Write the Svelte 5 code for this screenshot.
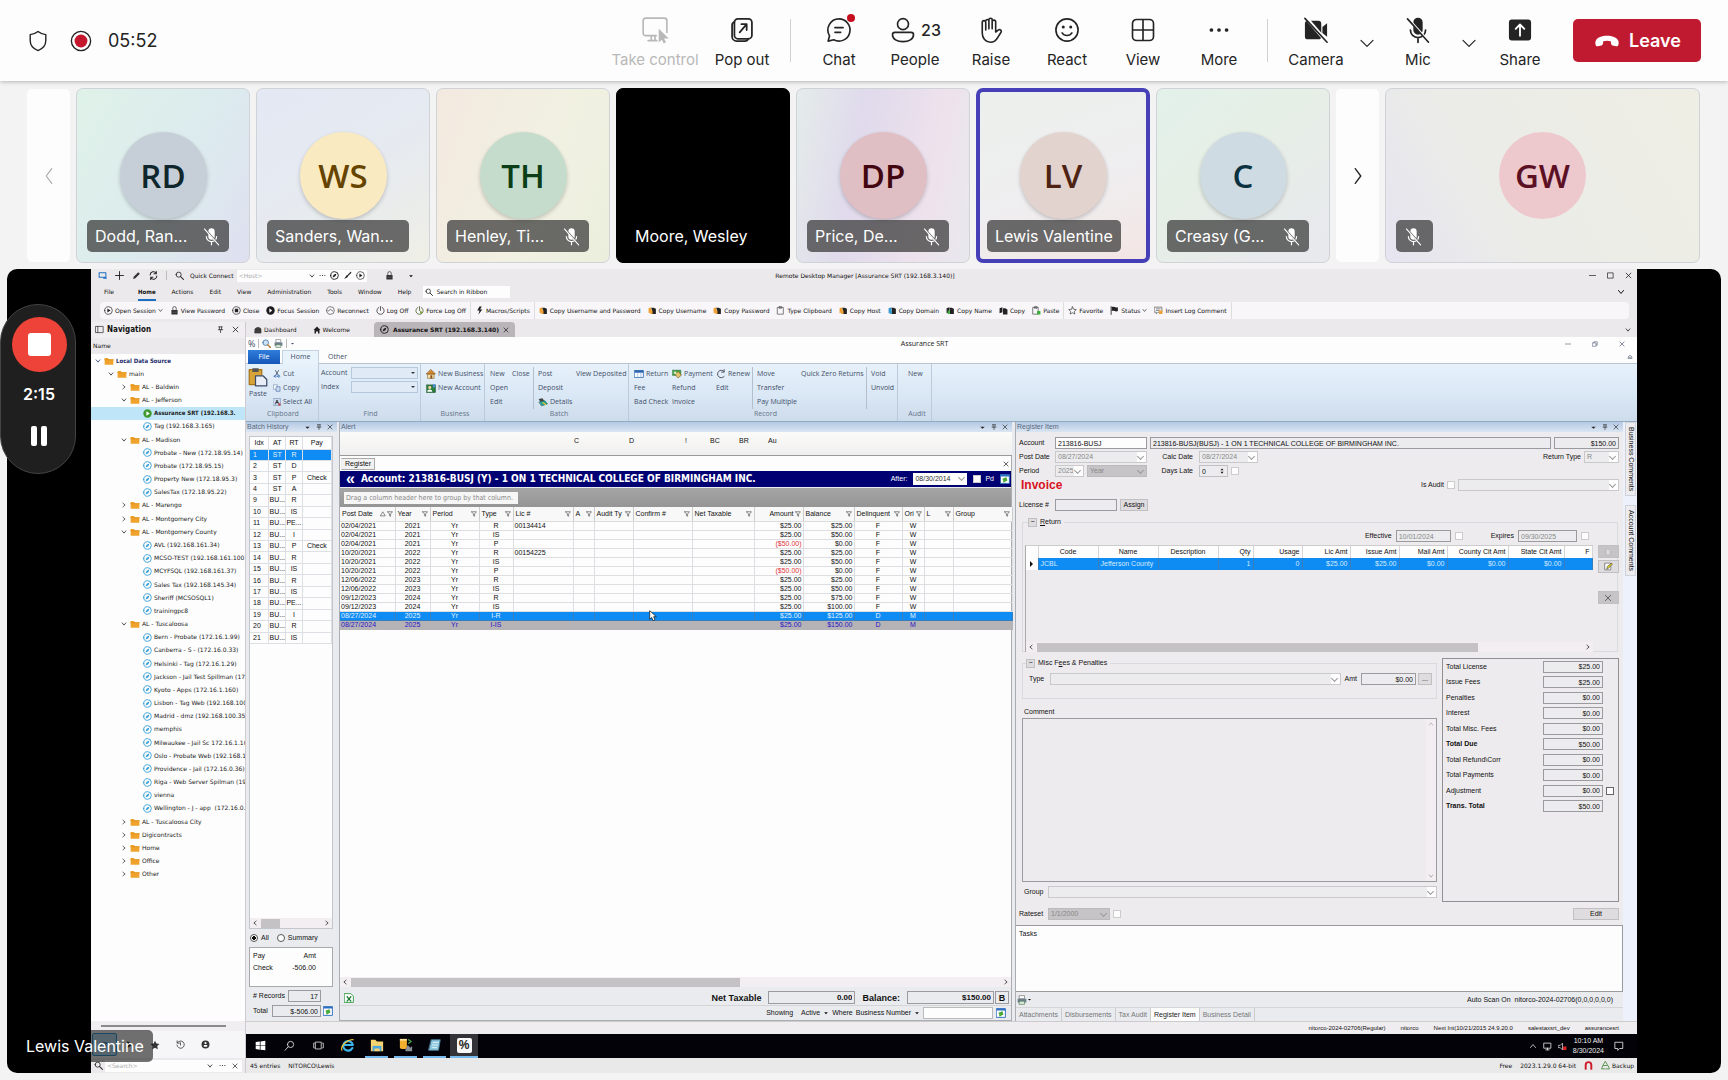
<script lang="ts">
	type Shape = [d: string, fill?: string, stroke?: string, width?: number];

	const circle = (cx: number, cy: number, r: number) =>
		`M${cx - r} ${cy}a${r} ${r} 0 1 0 ${2 * r} 0a${r} ${r} 0 1 0 ${-2 * r} 0z`;

	const INK = 'currentColor';

	// drawn on a 24 unit grid
	const large: Record<string, Shape[]> = {
		shield: [['M12 2.500c2.400 1.900 4.900 2.900 7.800 3.100v6c0 5-2.800 8.200-7.800 10-5-1.800-7.800-5-7.800-10v-6c2.900-.2 5.400-1.200 7.800-3.100z']],
		record: [
			[circle(12, 12, 10.5), 'none', '#242424', 1.5],
			[circle(12, 12, 7), '#c4162c', 'none']
		],
		control: [
			['M13 16.500H4.500a2 2 0 0 1-2-2v-10a2 2 0 0 1 2-2h15a2 2 0 0 1 2 2V14M9 16.500v4M12 16.500v4M6.500 20.500h7', 'none', INK, 1.3],
			['M15 11v11l2.500-2.300 1.500 3 1.800-1-1.600-2.900H23z', INK, 'none']
		],
		popout: [
			['M8.500 2.500h9a3 3 0 0 1 3 3v11a3 3 0 0 1-3 3h-9a3 3 0 0 1-3-3v-11a3 3 0 0 1 3-3z', 'none', INK, 1.5],
			['M5.500 5c-1.200.5-2 1.500-2 3v9.500a4 4 0 0 0 4 4h7c1.500 0 2.500-.8 3-2M10 14l6-7M11.500 7H16v5', 'none', INK, 1.5]
		],
		chat: [['M12 2.500a9.500 9.500 0 1 1-4.500 17.900L2.700 21.500l1.200-4.500A9.500 9.500 0 0 1 12 2.500zM8.500 10h7M8.500 14h5', 'none', INK, 1.4]],
		people: [
			[circle(12, 7, 4.700), 'none', INK, 1.4],
			['M5 14h14a2 2 0 0 1 2 2c0 3.800-4 6-9 6s-9-2.200-9-6a2 2 0 0 1 2-2z', 'none', INK, 1.4]
		],
		raise: [
			['M7.500 12V5.500a1.500 1.500 0 0 0-3 0v9c0 4.500 2.800 8 7 8 3.200 0 4.800-1.300 6.200-4l2.900-4.600c.9-1.300-.7-2.800-2.200-2l-2.400 1.800V5a1.500 1.500 0 0 0-3 0v6M13 11V3.300a1.400 1.400 0 0 0-2.800 0V11M10.200 11V4a1.400 1.400 0 0 0-2.700 0', 'none', INK, 1.4]
		],
		react: [
			[circle(12, 12, 9.5), 'none', INK, 1.4],
			['M7.800 14.500c1.800 3 6.600 3 8.400 0', 'none', INK, 1.4],
			[circle(8.800, 9.500, 1.300) + circle(15.200, 9.500, 1.300), INK, 'none']
		],
		view: [['M6.500 3h11a3.500 3.500 0 0 1 3.500 3.500v11a3.500 3.500 0 0 1-3.500 3.500h-11A3.500 3.500 0 0 1 3 17.500v-11A3.500 3.500 0 0 1 6.500 3zM12 3v18M3 12h18', 'none', INK, 1.4]],
		more: [[circle(5.500, 12, 1.600) + circle(12, 12, 1.600) + circle(18.500, 12, 1.600), INK, 'none']],
		camera: [
			['M5 4h9a2.500 2.500 0 0 1 2.500 2.500v11A2.500 2.500 0 0 1 14 20H5a2.500 2.500 0 0 1-2.500-2.500v-11A2.500 2.500 0 0 1 5 4zM17.500 9.500l4-3.200v11.400l-4-3.200z', INK, 'none'],
			['M3.500 1.500l18 21', 'none', '#fff', 3],
			['M2.500 2l19 20.500', 'none', INK, 1.4]
		],
		mic: [
			['M12 1.500a4 4 0 0 1 4 4v6.500a4 4 0 0 1-8 0V5.500a4 4 0 0 1 4-4z', INK, 'none'],
			['M5.500 12a6.500 6.500 0 0 0 13 0M12 18.500v4', 'none', INK, 1.5],
			['M3.800 2.500l18 20', 'none', 'var(--cut, #fff)', 2],
			['M3 2.500l18 20', 'none', INK, 1.4]
		],
		share: [
			['M5 3h14a2.500 2.500 0 0 1 2.500 2.500v13A2.500 2.500 0 0 1 19 21H5a2.500 2.500 0 0 1-2.500-2.500v-13A2.500 2.500 0 0 1 5 3z', INK, 'none'],
			['M12 17V7.500M8.300 11L12 7.300l3.700 3.700', 'none', '#fff', 1.6]
		],
		phone: [['M12 7.500c4.500 0 8 1.500 9.300 3.600.9 1.400.8 3 .4 4.300-.2.900-1 1.300-1.900 1.100l-3-.7c-.7-.2-1.200-.7-1.300-1.400l-.3-2.100c-2-.7-4.400-.7-6.400 0l-.3 2.100c-.1.700-.6 1.200-1.300 1.400l-3 .7c-.9.2-1.700-.2-1.900-1.100-.4-1.300-.5-2.900.4-4.300C4 9 7.500 7.500 12 7.500z', INK, 'none']],
		left: [['M15 4l-6 8 6 8', 'none', INK, 1.3]],
		right: [['M9 4l6 8-6 8', 'none', INK, 1.5]],
		down: [['M3 8l9 9 9-9', 'none', INK, 1.800]]
	};

	// drawn on a 16 unit grid
	const small: Record<string, Shape[]> = {
		monitor: [['M2 3h12v8H2zM10 13h5', 'none', '#1e6fc0', 1.800]],
		plus: [['M8 1v14M1 8h14', 'none', INK, 1.5]],
		pencil: [['M2 14l1-4 8-8 3 3-8 8z', '#333', 'none']],
		refresh: [['M2 7a6 6 0 0 1 11-3M14 9a6 6 0 0 1-11 3M13 1v4h-4M3 15v-4h4', 'none', '#222', 1.800]],
		search: [[circle(6.500, 6.500, 4.500), 'none', '#333', 1.600], ['M10 10l5 5', 'none', '#333', 2]],
		chevron: [['M3 5l5 6 5-6', 'none', INK, 2]],
		chevronRight: [['M5 3l6 5-6 5', 'none', INK, 1.800]],
		chevronLeft: [['M11 3L5 8l6 5', 'none', INK, 1.800]],
		dots: [[circle(2.500, 8, 1.200) + circle(8, 8, 1.200) + circle(13.500, 8, 1.200), INK, 'none']],
		session: [[circle(8, 8, 6.800), 'none', INK, 1.500], ['M4.500 11.500l2-5 5-2-2 5z', INK, 'none']],
		play: [[circle(8, 8, 6.800), 'none', '#333', 1.300], ['M6 4.500l5.500 3.500L6 11.500z', '#222', 'none']],
		stop: [[circle(8, 8, 6.800), 'none', '#333', 1.300], ['M5 5h6v6H5z', '#222', 'none']],
		focus: [[circle(8, 8, 7.500), '#1c1c1c', 'none'], ['M6 4l5 4-5 4z', '#fff', 'none']],
		active: [[circle(8, 8, 7.500), '#3f9a2f', 'none'], ['M6 4l6 4-6 4z', '#fff', 'none']],
		brush: [['M14 1L8 7l-2 1-4 6 6-3 1-2 6-6z', '#222', 'none']],
		lock: [['M2.500 7h11v8h-11z', '#333', 'none'], ['M5 7V4a3 3 0 0 1 6 0v3M5 11h6', 'none', '#555', 1.600]],
		reconnect: [[circle(8, 8, 6.800), 'none', '#444', 1.200], ['M4 9l4-3 4 3', 'none', '#444', 1.300]],
		power: [['M5 2.500a6.500 6.500 0 1 0 6 0M8 1v7', 'none', '#333', 1.400]],
		force: [['M5 2.500a6.500 6.500 0 1 0 6 0M8 1v7', 'none', '#4a5a2a', 1.400], ['M9 8l5 3-5 3z', '#7aa83a', 'none']],
		bolt: [['M8 1L4 8h4l-2 7 7-9H9l3-5z', '#1c1c1c', 'none']],
		copyOrange: [['M1 4l5-2v9l-5 2z', '#f0a030', 'none'], ['M6 3h4l4 2v9H7V8z', '#222', 'none'], ['M4 8h4v6H4z', '#f0a030', 'none']],
		copyGreen: [['M1 4l5-2v9l-5 2z', '#222', 'none'], ['M6 3h4l4 2v9H7V8z', '#222', 'none'], ['M3 8h4v6H3z', '#3fae3f', 'none']],
		copyBlue: [['M1 4l5-2v9l-5 2z', '#3a9ad0', 'none'], ['M6 3h4l4 2v9H7V8z', '#222', 'none'], ['M3 8h4v6H3z', '#3a9ad0', 'none']],
		copyBlack: [['M1 4l5-2v9l-5 2zM7 4h4l4 2v9H7z', '#222', 'none']],
		clipboard: [['M3 2.500h10v12H3zM6 1h4v3H6z', 'none', '#555', 1.300]],
		paste: [['M2 2.500h9v12H2zM5 1h4v3H5z', 'none', '#555', 1.300], ['M9 9h6v6H9z', '#3fae3f', 'none']],
		star: [['M8 1.500l2 4.300 4.700.6-3.400 3.200.9 4.700L8 12l-4.200 2.300.9-4.700L1.300 6.400 6 5.800z', 'none', '#333', 1.200]],
		starFull: [['M8 1l2.200 4.600 5 .6-3.700 3.400 1 5L8 12.200l-4.500 2.400 1-5L.8 6.200l5-.6z', '#333', 'none']],
		flag: [['M2 1v14', 'none', '#222', 1.500], ['M3 2c4-2 6 2 11 0v7c-5 2-7-2-11 0z', '#222', 'none']],
		comment: [['M1 2h13v9H7l-3 3v-3H1zM4 5h7M4 8h5', 'none', '#555', 1.200], ['M9 8h6v6H9z', '#f0a030', 'none']],
		panel: [['M1.500 2.500h13v11h-13zM5 2.500v11', 'none', '#333', 1.300]],
		pin: [['M4 2h8M5.500 2v6M10.500 2v6M3 8.500h10M8 9v6', 'none', INK, 1.500]],
		close: [['M2.500 2.500l11 11M13.500 2.500l-11 11', 'none', INK, 1.700]],
		minimize: [['M1 8h14', 'none', INK, 1.500]],
		maximize: [['M2 2h12v12H2z', 'none', INK, 1.500]],
		restore: [['M2 5h9v9H2zM5 5V2h9v9h-3', 'none', INK, 1.400]],
		caret: [['M3 6h10l-5 5z', INK, 'none']],
		spinner: [['M4 6l4-5 4 5zM4 10l4 5 4-5z', INK, 'none']],
		collapse: [['M3 8l5-5 5 5zM3 12h10', 'none', INK, 1.500]],
		folder: [['M1 3h5l2 2h7v9H1z', '#f0a32c', 'none'], ['M1 6h14', 'none', '#d98a14', 1]],
		dashboard: [['M2 6c2-4 10-4 12 0v8H2zM5 8h6', '#444', '#222', 1.200]],
		home: [['M8 1l7 7h-2v7h-3v-4H6v4H3V8H1z', '#222', 'none']],
		history: [['M2.500 5a6.500 6.500 0 1 1-.8 4M2 1.500v4h4M8 5v4', 'none', '#333', 1.400]],
		person: [[circle(8, 8, 7), '#333', 'none'], [circle(8, 5.500, 2) + 'M5 12V9h6v3z', '#fff', 'none']],
		eye: [['M1 9c3-6 11-6 14 0', 'none', '#0d77b5', 1.700], [circle(8, 9, 2.500), '#0d77b5', 'none']],
		playSolid: [['M4 2l10 6-10 6z', '#222', 'none']],
		print: [['M4 1h8v5H4z', '#fff', '#666', 1], ['M1 6h14v6H1z', '#6d7f8c', 'none'], ['M4 10h8v5H4z', '#dfe8df', '#4c7a4c', 1]],
		zoomColor: [[circle(6.500, 6.500, 5), '#cfe3f7', '#3a6ea5', 1.400], ['M10 10l5 5', 'none', '#b5762c', 2.500]],
		cut: [['M5 1l5 9M11 1L6 10', 'none', '#3b4a63', 1.600], [circle(4.500, 12.500, 2) + circle(11.500, 12.500, 2), 'none', '#2d67b2', 1.400]],
		copy: [['M1.500 1.500h7v9h-7z', '#fff', '#6b87ae', 1.200], ['M7 5.500h7v9H7z', '#cfe0f6', '#41669c', 1.200]],
		selectAll: [['M1 1h14v14H1z', '#c9d8ee', '#6b87ae', 1], ['M5 12l3-8 3 8M6 9h4', 'none', '#222', 1.500], ['M11 11h4v4h-4z', '#c33', 'none']],
		pasteBig: [['M1 2h10v12H1z', '#d9a437', '#a57519', 1], ['M3.500 1h5v3h-5z', '#555', 'none'], ['M6 7h6l3 3v5H6z', '#e9eef6', '#3b4c68', 1]],
		house: [['M3 8h10v7H3z', '#f6e2a8', '#8a6a2a', 1], ['M8 1l7 7H1z', '#d8862a', '#7a4a14', 1], ['M7 10h3v5H7z', '#8a4a1c', 'none']],
		account: [['M1 3h14v12H1z', '#2b7d3c', '#184f25', 1], [circle(6, 7, 2.500), '#f2d3a6', 'none'], ['M2 14c0-5 8-5 8 0z', '#fff', 'none'], ['M11 2h4v5h-4z', '#4a90d8', 'none']],
		details: [['M1 3l6-1 3 4-6 2z', '#444', 'none'], ['M2 8l9-2 4 5-9 3z', '#2aa39a', '#135e58', 1], ['M8 9l4 3', 'none', '#e9c832', 2]],
		table: [['M1 2.500h14v11H1z', '#fff', '#2d67b2', 1.300], ['M1 2h14v4H1z', '#2d67b2', 'none'], ['M6 6v8M11 6v8', 'none', '#7aa0d2', 1]],
		money: [['M1 2h13v8H1z', '#4aa64a', '#21662a', 1], ['M5 8l5-4 5 6-5 4z', '#e4c46a', '#7b5a14', 1], [circle(5, 6, 2), '#dff0d0', 'none']],
		renew: [['M13 4a6 6 0 1 0 0 8M13 1v4H9', 'none', '#556', 1.600]],
		funnel: [['M1.500 2h13L9.500 8v6l-3-1.500V8z', 'none', '#444', 1.600]],
		sort: [['M8 3l6 10H2z', 'none', '#444', 1.600]],
		excel: [['M1 1h10l4 4v10H1z', '#fff', '#37a04a', 1.500], ['M5 6l6 7M11 6l-6 7', 'none', '#1d7a33', 2]],
		reload: [['M1 1h14v14H1z', '#fff', '#2d6ec0', 1.500], ['M1 1h14v3H1z', '#2d6ec0', 'none'], ['M5 8l5-2v3zM11 10l-5 3v-3z', '#5fb32f', '#3fa22f', 1.500]],
		page: [['M4 2h6l3 3v9H4z', '#d7d7d7', '#aaa', 1]],
		edit: [['M2 2h10v12H2z', '#fff', '#444', 1], ['M5 12l1-4 7-6 2 2-7 7z', '#e3cf28', '#333', 1]],
		windows: [['M1 3l6-1v5.500H1zM8 2l7-1v6.500H8zM1 8.500h6V14l-6-1zM8 8.500h7V15l-7-1z', '#fff', 'none']],
		find: [[circle(9.500, 6.500, 4.500), 'none', '#ddd', 1.300], ['M6 10l-4.500 5', 'none', '#ddd', 1.300]],
		tasks: [['M4 3h8v10H4zM2 4.500H1v7h1M14 4.500h1v7h-1', 'none', '#ddd', 1.200]],
		ie: [['M13 11.500a5.500 5.500 0 1 1 .5-3.500H4', 'none', '#3cb4ee', 2.500], ['M1 14C-1 9 8 1 14 2', 'none', '#f4c430', 1.300]],
		explorer: [['M1 2h5l2 2h7v11H1z', '#f6d271', 'none'], ['M3 9h10v6H3z', '#4aa5dc', 'none'], ['M5 12h6v3H5z', '#f6d271', 'none']],
		tool: [['M1 1h8v10c0 2-8 2-8 0z', '#f0b02e', 'none'], ['M1 1h8v2H1z', '#fbe09a', 'none'], ['M7 14l3-6 3 3 2-2v6H8z', '#8a8f96', 'none'], ['M11 2l3 2-3 2', 'none', '#4aa64a', 1.500]],
		notepad: [['M4 2h10l-2 12H1z', '#8cc6dc', '#4a7f97', 1], ['M6 5h6M5 8h6M5 11h5', 'none', '#e7f6fb', 1]],
		up: [['M3 11l5-6 5 6', 'none', INK, 1.500]],
		network: [['M2 2h12v9H2zM8 11v3M5 14h6', 'none', '#eee', 1.400]],
		speaker: [['M1 6h3l4-4v12l-4-4H1z', 'none', '#eee', 1.200], ['M9 8h6v6H9z', '#d22', 'none']],
		notice: [['M2 2h12v10H9l-3 3v-3H2z', 'none', '#eee', 1.300]],
		magnet: [['M3 14V7a5 5 0 0 1 10 0v7', 'none', '#cf1c2a', 3.500]],
		backup: [['M8 1l4 7H4zM3 9l-2 5h6M13 9l2 5H9', 'none', '#4a8a3a', 1.500]]
	};

	const people = [
		{ initials: 'RD', name: 'Dodd, Ran...', muted: true, tone: 'mint', disc: '#c6cfd8', ink: '#0f262c' },
		{ initials: 'WS', name: 'Sanders, Wan...', muted: false, tone: 'sky', disc: '#faeac2', ink: '#664400' },
		{ initials: 'TH', name: 'Henley, Ti...', muted: true, tone: 'sand', disc: '#c5dccd', ink: '#0b3d16' },
		{ initials: '', name: 'Moore, Wesley', muted: false, tone: 'black', disc: '', ink: '' },
		{ initials: 'DP', name: 'Price, De...', muted: true, tone: 'lilac', disc: '#dfbfc4', ink: '#420610' },
		{ initials: 'LV', name: 'Lewis Valentine', muted: false, tone: 'speaking', disc: '#e2d3ce', ink: '#4e2314' },
		{ initials: 'C', name: 'Creasy (G...', muted: true, tone: 'green', disc: '#cfdbe2', ink: '#0b3240' }
	];

	const menus = ['File', 'Home', 'Actions', 'Edit', 'View', 'Administration', 'Tools', 'Window', 'Help'];

	const actions = [
		{ icon: 'play', label: 'Open Session', drop: true },
		{ icon: 'lock', label: 'View Password' },
		{ icon: 'stop', label: 'Close' },
		{ icon: 'focus', label: 'Focus Session' },
		{ icon: 'reconnect', label: 'Reconnect' },
		{ icon: 'power', label: 'Log Off' },
		{ icon: 'force', label: 'Force Log Off', end: true },
		{ icon: 'bolt', label: 'Macros/Scripts', end: true },
		{ icon: 'copyOrange', label: 'Copy Username and Password' },
		{ icon: 'copyOrange', label: 'Copy Username' },
		{ icon: 'copyOrange', label: 'Copy Password' },
		{ icon: 'clipboard', label: 'Type Clipboard' },
		{ icon: 'copyOrange', label: 'Copy Host' },
		{ icon: 'copyBlue', label: 'Copy Domain' },
		{ icon: 'copyGreen', label: 'Copy Name' },
		{ icon: 'copyBlack', label: 'Copy' },
		{ icon: 'paste', label: 'Paste', end: true },
		{ icon: 'star', label: 'Favorite' },
		{ icon: 'flag', label: 'Status', drop: true },
		{ icon: 'comment', label: 'Insert Log Comment', end: true }
	];

	// depth, label, folder state ('open' | 'shut') or a session
	const tree: [number, string, string][] = [
		[0, 'Local Data Source', 'open'],
		[1, 'main', 'open'],
		[2, 'AL - Baldwin', 'shut'],
		[2, 'AL - Jefferson', 'open'],
		[3, 'Assurance SRT (192.168.3.', 'active'],
		[3, 'Tag (192.168.3.165)', ''],
		[2, 'AL - Madison', 'open'],
		[3, 'Probate - New (172.18.95.14)', ''],
		[3, 'Probate (172.18.95.15)', ''],
		[3, 'Property New (172.18.95.3)', ''],
		[3, 'SalesTax (172.18.95.22)', ''],
		[2, 'AL - Marengo', 'shut'],
		[2, 'AL - Montgomery City', 'shut'],
		[2, 'AL - Montgomery County', 'open'],
		[3, 'AVL (192.168.161.34)', ''],
		[3, 'MCSO-TEST (192.168.161.100)', ''],
		[3, 'MCYFSQL (192.168.161.37)', ''],
		[3, 'Sales Tax (192.168.145.34)', ''],
		[3, 'Sheriff (MCSOSQL1)', ''],
		[3, 'trainingpc8', ''],
		[2, 'AL - Tuscaloosa', 'open'],
		[3, 'Bern - Probate (172.16.1.99)', ''],
		[3, 'Canberra - S - (172.16.0.33)', ''],
		[3, 'Helsinki - Tag (172.16.1.29)', ''],
		[3, 'Jackson - Jail Test Spillman (17.', ''],
		[3, 'Kyoto - Apps (172.16.1.160)', ''],
		[3, 'Lisbon - Tag Web (192.168.100', ''],
		[3, 'Madrid - dmz (192.168.100.35)', ''],
		[3, 'memphis', ''],
		[3, 'Milwaukee - Jail Sc 172.16.1.10', ''],
		[3, 'Oslo - Probate Web (192.168.1', ''],
		[3, 'Providence - Jail (172.16.0.36)', ''],
		[3, 'Riga - Web Server Spilman (192', ''],
		[3, 'vienna', ''],
		[3, 'Wellington - J - app  (172.16.0.', ''],
		[2, 'AL - Tuscaloosa City', 'shut'],
		[2, 'Digicontracts', 'shut'],
		[2, 'Home', 'shut'],
		[2, 'Office', 'shut'],
		[2, 'Other', 'shut']
	];

	type Cmd = { label: string; icon?: string };
	const ribbon: { caption: string; width: number; cols: { width: number; sep?: boolean; items: Cmd[] }[] }[] = [
		{
			caption: 'Business',
			width: 64,
			cols: [{ width: 58, items: [{ label: 'New Business', icon: 'house' }, { label: 'New Account', icon: 'account' }] }]
		},
		{
			caption: 'Batch',
			width: 144,
			cols: [
				{ width: 22, items: [{ label: 'New' }, { label: 'Open' }, { label: 'Edit' }] },
				{ width: 21, items: [{ label: 'Close' }] },
				{ width: 43, sep: true, items: [{ label: 'Post' }, { label: 'Deposit' }, { label: 'Details', icon: 'details' }] },
				{ width: 52, items: [{ label: 'View Deposited' }] }
			]
		},
		{
			caption: 'Record',
			width: 269,
			cols: [
				{ width: 38, items: [{ label: 'Return', icon: 'table' }, { label: 'Fee' }, { label: 'Bad Check' }] },
				{ width: 44, items: [{ label: 'Payment', icon: 'money' }, { label: 'Refund' }, { label: 'Invoice' }] },
				{ width: 36, items: [{ label: 'Renew', icon: 'renew' }, { label: 'Edit' }] },
				{ width: 49, sep: true, items: [{ label: 'Move' }, { label: 'Transfer' }, { label: 'Pay Multiple' }] },
				{ width: 65, items: [{ label: 'Quick Zero Returns' }] },
				{ width: 30, sep: true, items: [{ label: 'Void' }, { label: 'Unvoid' }] }
			]
		},
		{ caption: 'Audit', width: 34, cols: [{ width: 5, items: [] }, { width: 20, items: [{ label: 'New' }] }] }
	];

	const batch = [
		['1', 'ST', 'R', ''],
		['2', 'ST', 'D', ''],
		['3', 'ST', 'P', 'Check'],
		['4', 'ST', 'A', ''],
		['9', 'BU...', 'R', ''],
		['10', 'BU...', 'IS', ''],
		['11', 'BU...', 'PE...', ''],
		['12', 'BU...', 'I', ''],
		['13', 'BU...', 'P', 'Check'],
		['14', 'BU...', 'R', ''],
		['15', 'BU...', 'IS', ''],
		['16', 'BU...', 'R', ''],
		['17', 'BU...', 'IS', ''],
		['18', 'BU...', 'PE...', ''],
		['19', 'BU...', 'I', ''],
		['20', 'BU...', 'R', ''],
		['21', 'BU...', 'IS', '']
	];

	const columns = [
		{ label: 'Post Date', width: 55, align: 'left', sorted: true },
		{ label: 'Year', width: 35, align: 'middle' },
		{ label: 'Period', width: 49, align: 'middle' },
		{ label: 'Type', width: 34, align: 'middle' },
		{ label: 'Lic #', width: 60, align: 'left' },
		{ label: 'A', width: 21, align: 'middle' },
		{ label: 'Audit Ty', width: 39, align: 'left' },
		{ label: 'Confirm #', width: 59, align: 'left' },
		{ label: 'Net Taxable', width: 62, align: 'left' },
		{ label: 'Amount', width: 49, align: 'right' },
		{ label: 'Balance', width: 51, align: 'right' },
		{ label: 'Delinquent', width: 48, align: 'middle' },
		{ label: 'Ori', width: 22, align: 'middle' },
		{ label: 'L', width: 29, align: 'left' },
		{ label: 'Group', width: 59, align: 'left' }
	];

	const entry = (date: string, year: string, type: string, lic: string, amount: string, balance: string, del = 'F', ori = 'W') => [
		date, year, 'Yr', type, lic, '', '', '', '', amount, balance, del, ori, '', ''
	];

	const register = [
		entry('02/04/2021', '2021', 'R', '00134414', '$25.00', '$25.00'),
		entry('02/04/2021', '2021', 'IS', '', '$25.00', '$50.00'),
		entry('02/04/2021', '2021', 'P', '', '($50.00)', '$0.00'),
		entry('10/20/2021', '2022', 'R', '00154225', '$25.00', '$25.00'),
		entry('10/20/2021', '2022', 'IS', '', '$25.00', '$50.00'),
		entry('10/20/2021', '2022', 'P', '', '($50.00)', '$0.00'),
		entry('12/06/2022', '2023', 'R', '', '$25.00', '$25.00'),
		entry('12/06/2022', '2023', 'IS', '', '$25.00', '$50.00'),
		entry('09/12/2023', '2024', 'R', '', '$25.00', '$75.00'),
		entry('09/12/2023', '2024', 'IS', '', '$25.00', '$100.00'),
		entry('08/27/2024', '2025', 'I-R', '', '$25.00', '$125.00', 'D', 'M'),
		entry('08/27/2024', '2025', 'I-IS', '', '$25.00', '$150.00', 'D', 'M')
	];

	const feeColumns: [string, number, string, string][] = [
		['', 12, '', 'left'],
		['Code', 60, 'JCBL', 'left'],
		['Name', 60, 'Jefferson County', 'left'],
		['Description', 60, '', 'left'],
		['Qty', 35, '1', 'right'],
		['Usage', 49, '0', 'right'],
		['Lic Amt', 48, '$25.00', 'right'],
		['Issue Amt', 49, '$25.00', 'right'],
		['Mail Amt', 48, '$0.00', 'right'],
		['County Cit Amt', 61, '$0.00', 'right'],
		['State Cit Amt', 56, '$0.00', 'right'],
		['F', 28, '', 'right']
	];

	const totals = [
		['Total License', '$25.00'],
		['Issue Fees', '$25.00'],
		['Penalties', '$0.00'],
		['Interest', '$0.00'],
		['Total Misc. Fees', '$0.00'],
		['Total Due', '$50.00'],
		['Total Refund\\Corr', '$0.00'],
		['Total Payments', '$0.00'],
		['Adjustment', '$0.00'],
		['Trans. Total', '$50.00']
	];

	const apps = ['windows', 'find', 'tasks', 'ie', 'explorer', 'tool', 'notepad'];
	const pages = ['Attachments', 'Disbursements', 'Tax Audit', 'Register Item', 'Business Detail'];
	const flags = ['C', 'D', '!', 'BC', 'BR', 'Au'];
</script>

{#snippet glyph(set: Record<string, Shape[]>, name: string, box: number, size: number)}
	<svg class="glyph" viewBox="0 0 {box} {box}" width={size} height={size} aria-hidden="true">
		{#each set[name] as [d, fill, stroke, width]}
			<path {d} fill={fill ?? 'none'} stroke={stroke ?? INK} stroke-width={width ?? 1.4} stroke-linecap="round" stroke-linejoin="round" />
		{/each}
	</svg>
{/snippet}

{#snippet big(name: string, size = 28)}
	{@render glyph(large, name, 24, size)}
{/snippet}

{#snippet ico(name: string, size = 8)}
	{@render glyph(small, name, 16, size)}
{/snippet}

{#snippet call(name: string, label: string)}
	<button class="call">
		<span class="call-icon">{@render big(name)}</span>
		<span>{label}</span>
	</button>
{/snippet}

{#snippet combo(label: string, value: string, kind = '')}
	<span class="combo {kind}">
		<select aria-label={label}><option>{value}</option></select>
	</span>
{/snippet}

{#snippet hscroll(kind: string)}
	<div class="hscroll">
		{@render ico('chevronLeft', 6)}
		<div class="track"><div class="thumb {kind}"></div></div>
		{@render ico('chevronRight', 6)}
	</div>
{/snippet}

{#snippet dock(title: string)}
	<header class="dock">
		<span>{title}</span>
		<span class="dock-tools">{@render ico('caret', 7)}{@render ico('pin', 6)}{@render ico('close', 6)}</span>
	</header>
{/snippet}

<main class="meeting">
	<header class="bar">
		<div class="status">
			{@render big('shield', 24)}
			{@render big('record', 22)}
			<span class="timer">05:52</span>
		</div>
		<div class="calls">
			<button class="call wide" disabled>
				<span class="call-icon">{@render big('control', 30)}</span>
				<span>Take control</span>
			</button>
			{@render call('popout', 'Pop out')}
			<i class="rule"></i>
			<button class="call">
				<span class="call-icon">{@render big('chat')}<i class="dot"></i></span>
				<span>Chat</span>
			</button>
			<button class="call">
				<span class="call-icon">{@render big('people')}<b>23</b></span>
				<span>People</span>
			</button>
			{@render call('raise', 'Raise')}
			{@render call('react', 'React')}
			{@render call('view', 'View')}
			{@render call('more', 'More')}
			<i class="rule"></i>
			{@render call('camera', 'Camera')}
			<button class="drop" aria-label="Camera options">{@render big('down', 16)}</button>
			{@render call('mic', 'Mic')}
			<button class="drop" aria-label="Mic options">{@render big('down', 16)}</button>
			{@render call('share', 'Share')}
			<button class="leave">{@render big('phone', 28)}<span>Leave</span></button>
		</div>
	</header>

	<section class="strip">
		<button class="pager off" aria-label="Previous">{@render big('left', 22)}</button>
		{#each people as p}
			<article class="tile {p.tone}">
				{#if p.initials}
					<span class="avatar" style:background={p.disc} style:color={p.ink}>{p.initials}</span>
				{/if}
				<span class="tag" class:full={p.muted}>{p.name}{#if p.muted}{@render big('mic', 19)}{/if}</span>
			</article>
		{/each}
		<button class="pager" aria-label="Next">{@render big('right', 22)}</button>
		<article class="tile self">
			<span class="avatar pink">GW</span>
			<span class="tag">{@render big('mic', 19)}</span>
		</article>
	</section>

	<section class="stage">
		<div class="rdm">
			<div class="quick">
				<div class="quick-left">
					{@render ico('monitor', 9)}{@render ico('plus', 9)}{@render ico('pencil', 9)}{@render ico('refresh', 9)}
					<i class="vline"></i>
					{@render ico('search', 9)}
					<label for="host">Quick Connect</label>
					<span class="host">
						<input id="host" placeholder="<Host>" />
						{@render ico('chevron', 6)}{@render ico('dots', 7)}{@render ico('session', 9)}{@render ico('brush', 9)}{@render ico('play', 9)}
					</span>
					<span class="lock">{@render ico('lock', 9)}</span>
					{@render ico('caret', 6)}
				</div>
				<span>Remote Desktop Manager [Assurance SRT (192.168.3.140)]</span>
				<div class="win">{@render ico('minimize', 7)}{@render ico('maximize', 7)}{@render ico('close', 7)}</div>
			</div>

			<nav class="menu">
				{#each menus as m}
					<button class:on={m === 'Home'}>{m}</button>
				{/each}
				<label class="find">{@render ico('search', 8)}<input aria-label="Search in Ribbon" value="Search in Ribbon" /></label>
				<span class="fold">{@render ico('chevron', 8)}</span>
			</nav>

			<div class="actions">
				{#each actions as a}
					<button class:end={a.end}>
						{@render ico(a.icon, 9)}{a.label}{#if a.drop}{@render ico('chevron', 5)}{/if}
					</button>
				{/each}
			</div>

			<div class="body">
				<aside class="nav">
					<h2>{@render ico('panel', 9)}<span>Navigation</span>{@render ico('pin', 7)}{@render ico('close', 7)}</h2>
					<div class="nav-name">Name</div>
					<ul class="tree">
						{#each tree as [depth, label, kind]}
							<li class:active={kind === 'active'} class:root={depth === 0} style:padding-left="{4 + depth * 13}px">
								<span class="twist">
									{#if kind === 'open'}{@render ico('chevron', 6)}{:else if kind === 'shut'}{@render ico('chevronRight', 6)}{/if}
								</span>
								{#if kind === 'open' || kind === 'shut'}
									{@render ico('folder', 10)}
								{:else}
									{@render ico(kind || 'session', 9)}
								{/if}
								<span>{label}</span>
							</li>
						{/each}
					</ul>
					<div class="blank"></div>
					<div class="nav-scroll"><i></i></div>
					<div class="nav-tools">
						<span class="picked">{@render ico('eye', 10)}</span>
						{@render ico('playSolid', 9)}{@render ico('starFull', 10)}{@render ico('history', 9)}{@render ico('person', 9)}
					</div>
					<div class="nav-search">
						{@render ico('search', 9)}
						<label><input aria-label="Search" placeholder="<Search>" />{@render ico('chevron', 6)}{@render ico('dots', 7)}{@render ico('close', 6)}</label>
					</div>
				</aside>

				<div class="work">
					<div class="tabs">
						<button>{@render ico('dashboard')}Dashboard</button>
						<button>{@render ico('home')}Welcome</button>
						<button class="on">{@render ico('session', 9)}Assurance SRT (192.168.3.140){@render ico('close', 6)}</button>
						<span class="fold">{@render ico('chevron', 6)}</span>
					</div>

					<div class="srt">
						<div class="title">
							<span class="title-tools">%<i class="vline"></i>{@render ico('zoomColor', 9)}{@render ico('print', 9)}<i class="vline"></i>{@render ico('caret', 5)}</span>
							<h1>Assurance SRT</h1>
							<span class="title-win">{@render ico('minimize', 6)}{@render ico('restore', 6)}{@render ico('close', 6)}</span>
						</div>
						<div class="ribbon-tabs">
							<button class="file">File</button>
							<button class="on">Home</button>
							<button>Other</button>
							<span class="fold">{@render ico('collapse', 6)}</span>
						</div>
						<div class="ribbon">
							<div class="group clip">
								<div class="cols">
									<button class="paste">{@render ico('pasteBig', 20)}Paste</button>
									<div class="col">
										<button>{@render ico('cut')}Cut</button>
										<button>{@render ico('copy')}Copy</button>
										<button>{@render ico('selectAll')}Select All</button>
									</div>
								</div>
								<p>Clipboard</p>
							</div>
							<div class="group lookup">
								<div class="fields">
									<span>Account</span>{@render combo('Account', '', 'pale')}
									<span>Index</span>{@render combo('Index', '', 'pale')}
								</div>
								<p>Find</p>
							</div>
							{#each ribbon as g}
								<div class="group" style:width="{g.width}px">
									<div class="cols">
										{#each g.cols as c}
											<div class="col" class:sep={c.sep} style:width="{c.width}px">
												{#each c.items as item}
													<button>{#if item.icon}{@render ico(item.icon, 10)}{/if}{item.label}</button>
												{/each}
											</div>
										{/each}
									</div>
									<p>{g.caption}</p>
								</div>
							{/each}
						</div>

						<div class="panes">
							<section class="history">
								{@render dock('Batch History')}
								<div class="history-in">
									<div class="sheet">
										<table class="batch">
											<thead>
												<tr><th>Idx</th><th>AT</th><th>RT</th><th>Pay</th></tr>
											</thead>
											<tbody>
												{#each batch as row, i}
													<tr class:on={i === 0}>
														{#each row as cell}<td>{cell}</td>{/each}
													</tr>
												{/each}
											</tbody>
										</table>
										{@render hscroll('short')}
									</div>
									<div class="radios">
										<label><input type="radio" name="scope" checked />All</label>
										<label><input type="radio" name="scope" />Summary</label>
									</div>
									<table class="pay">
										<tbody>
											<tr><td>Pay</td><td>Amt</td></tr>
											<tr><td>Check</td><td>-506.00</td></tr>
										</tbody>
									</table>
									<div class="sum"><label for="records"># Records</label><input id="records" class="narrow" value="17" /><i></i></div>
									<div class="sum"><label for="total">Total</label><input id="total" value="$-506.00" />{@render ico('reload', 10)}</div>
								</div>
							</section>

							<section class="center">
								{@render dock('Alert')}
								<div class="alerts">
									{#each flags as f}<span>{f}</span>{/each}
								</div>
								<div class="frame">
									<div class="frame-tabs"><button>Register</button>{@render ico('close', 6)}</div>
									<div class="account">
										<b class="back">«</b>
										<h2>Account: 213816-BUSJ (Y) - 1 ON 1 TECHNICAL COLLEGE OF BIRMINGHAM INC.</h2>
										<label for="after">After:</label>
										<span class="combo date"><input id="after" value="08/30/2014" /></span>
										<label class="pd"><input type="checkbox" />Pd</label>
										{@render ico('reload', 10)}
									</div>
									<div class="grouping"><span>Drag a column header here to group by that column.</span></div>
									<div class="grid">
										<table class="register">
											<colgroup>
												{#each columns as c}<col style:width="{c.width}px" />{/each}
											</colgroup>
											<thead>
												<tr>
													{#each columns as c}
														<th>
															<div class:push={c.label === 'Amount'}>
																<span>{c.label}</span>
																{#if c.sorted}{@render ico('sort', 6)}{/if}{@render ico('funnel', 6)}
															</div>
														</th>
													{/each}
												</tr>
											</thead>
											<tbody>
												{#each register as row, i}
													<tr class:on={i === 10} class:draft={i === 11}>
														{#each row as cell, n}
															<td class={columns[n].align} class:minus={cell.startsWith('(')}>{cell}</td>
														{/each}
													</tr>
												{/each}
											</tbody>
										</table>
										<svg class="pointer" viewBox="0 0 12 18" width="8" height="12" aria-hidden="true">
											<path d="M1 1v13l3-3 2 5 3-1-2-5h4z" fill="#fff" stroke="#222" stroke-width="1.2" />
										</svg>
									</div>
									{@render hscroll('long')}
									<div class="foot">
										{@render ico('excel', 10)}
										<span class="grow"></span>
										<label for="taxable">Net Taxable</label><input id="taxable" value="0.00" />
										<label for="balance">Balance:</label><input id="balance" value="$150.00" />
										<button>B</button>
									</div>
									<div class="filter">
										<span>Showing</span><span>Active</span>{@render ico('caret', 6)}<span>Where</span><span>Business Number</span>{@render ico('caret', 6)}
										<input aria-label="Business Number" />{@render ico('reload', 10)}
									</div>
								</div>
							</section>

							<section class="item">
								{@render dock('Register Item')}
								<div class="form">
									<div class="line">
										<label class="lead" for="acct">Account</label>
										<input id="acct" class="w92 white" value="213816-BUSJ" />
										<input class="grow" aria-label="Account name" value="213816-BUSJ(BUSJ) - 1 ON 1 TECHNICAL COLLEGE OF BIRMINGHAM INC." />
										<input class="w65 num" aria-label="Account balance" value="$150.00" />
									</div>
									<div class="line">
										<span class="lead">Post Date</span>{@render combo('Post Date', '08/27/2024', 'w92')}
										<span class="mid">Calc Date</span>{@render combo('Calc Date', '08/27/2024', 'w59')}
										<span class="grow"></span>
										<span>Return Type</span>{@render combo('Return Type', 'R', 'w35')}
									</div>
									<div class="line">
										<span class="lead">Period</span>{@render combo('Period', '2025', 'w29')}{@render combo('Period unit', 'Year', 'w60 grey')}
										<label class="mid" for="late">Days Late</label>
										<span class="spin"><input id="late" value="0" />{@render ico('spinner', 6)}</span>
										<input type="checkbox" aria-label="Override days late" />
									</div>
									<div class="line invoice">
										<h3>Invoice</h3>
										<span class="grow"></span>
										<label for="audit">Is Audit</label><input id="audit" type="checkbox" />
										{@render combo('Audit', '', 'w161')}
									</div>
									<div class="line licence">
										<label class="lead" for="licence">License #</label><input id="licence" class="w62" />
										<button>Assign</button>
									</div>

									<fieldset class="return">
										<legend><button aria-label="Collapse return">−</button><span><u>R</u>eturn</span></legend>
										<div class="dates">
											<label for="eff">Effective</label><input id="eff" class="w55" value="10/01/2024" /><input type="checkbox" aria-label="Override effective" />
											<label for="exp">Expires</label><input id="exp" class="w59" value="09/30/2025" /><input type="checkbox" aria-label="Override expires" />
										</div>
										<div class="fees">
											<div class="fees-grid">
												<table>
													<colgroup>
														{#each feeColumns as [, width]}<col style:width="{width}px" />{/each}
													</colgroup>
													<thead>
														<tr>{#each feeColumns as [label, , , align]}<th class={align}>{label}</th>{/each}</tr>
													</thead>
													<tbody>
														<tr>{#each feeColumns as [, , value, align], i}<td class={align}>{#if i === 0}<i class="row-mark"></i>{/if}{value}</td>{/each}</tr>
													</tbody>
												</table>
												{@render hscroll('most')}
											</div>
											<div class="fees-tools">
												<button class="off" aria-label="New fee">{@render ico('page')}</button>
												<button aria-label="Edit fee">{@render ico('edit', 9)}</button>
												<button class="off gap" aria-label="Delete fee">{@render ico('close')}</button>
											</div>
										</div>
									</fieldset>

									<div class="lower">
										<div class="lower-left">
											<fieldset class="misc">
												<legend><button aria-label="Collapse fees">−</button><span>Misc F<u>e</u>es &amp; Penalties</span></legend>
												<div class="misc-line">
													<span>Type</span>{@render combo('Type', '', 'grow')}
													<label for="amt">Amt</label><input id="amt" class="w55 num" value="$0.00" />
													<button>...</button>
												</div>
											</fieldset>
											<label class="note" for="comment">Comment</label>
											<div class="comment">
												<textarea id="comment"></textarea>
												<span>{@render ico('up', 6)}{@render ico('chevron', 6)}</span>
											</div>
											<div class="line last"><span class="lead">Group</span>{@render combo('Group', '', 'grow')}</div>
										</div>
										<div class="totals">
											<div class="totals-rows">
												{#each totals as [label, value], i}
													<div class:bold={i === 5 || i === 9}>
														<label for="t{i}">{label}</label><input id="t{i}" class="w60 num" {value} />
														{#if i === 8}<input type="checkbox" aria-label="Override adjustment" />{:else}<i></i>{/if}
													</div>
												{/each}
											</div>
											<div class="totals-rest"></div>
										</div>
									</div>
									<div class="line rate">
										<span class="lead">Rateset</span>{@render combo('Rateset', '1/1/2000', 'w62 grey')}
										<input type="checkbox" aria-label="Override rateset" />
										<span class="grow"></span>
										<button class="w46">Edit</button>
									</div>
								</div>
								<div class="todo"><span>Tasks</span></div>
								<div class="scan">{@render ico('print', 10)}{@render ico('caret', 5)}<span>Auto Scan On&nbsp; nitorco-2024-02706(0,0,0,0,0,0)</span></div>
								<div class="pages">
									{#each pages as p}<button class:on={p === 'Register Item'}>{p}</button>{/each}
								</div>
							</section>

							<aside class="side">
								<button>Business Comments</button>
								<button>Account Comments</button>
							</aside>
						</div>

						<footer class="info">
							<span>nitorco-2024-02706(Regular)</span><span>nitorco</span><span>Next Int(10/21/2015 24.9.20.0</span><span>salestaxsrt_dev</span><span>assurancesrt</span>
						</footer>
					</div>

					<div class="taskbar">
						{#each apps as a, i}
							<button class:open={i > 3} aria-label={a}>{@render ico(a, i < 3 ? 11 : 14)}</button>
						{/each}
						<button class="open on" aria-label="Assurance"><b>%</b></button>
						<span class="grow"></span>
						{@render ico('up')}{@render ico('network', 9)}{@render ico('speaker', 9)}
						<time>10:10 AM<br />8/30/2024</time>
						{@render ico('notice', 10)}
					</div>
					<footer class="entries">
						<span>45 entries</span><span>NITORCO\Lewis</span><i class="grow"></i>
						<span>Free</span><span>2023.1.29.0 64-bit</span>{@render ico('magnet', 9)}<span class="backup">{@render ico('backup', 9)}Backup</span>
					</footer>
				</div>
			</div>
		</div>
		<span class="presenter">Lewis Valentine</span>
	</section>

	<div class="recorder">
		<button class="halt" aria-label="Stop recording"></button>
		<span>2:15</span>
		<button class="pause" aria-label="Pause recording"></button>
	</div>
</main>

<style>
	:global(body) {
		margin: 0;
		background: #f3f3f3;
	}

	.meeting {
		position: relative;
		display: flex;
		flex-direction: column;
		height: 100vh;
		font-family: Inter, 'Liberation Sans', sans-serif;
		color: #242424;
	}

	.meeting :is(*, *::before, *::after) {
		box-sizing: border-box;
	}

	button,
	input,
	select,
	textarea {
		margin: 0;
		padding: 0;
		border: none;
		border-radius: 0;
		background: none;
		font: inherit;
		color: inherit;
		min-width: 0;
	}

	h1,
	h2,
	h3,
	p,
	ul {
		margin: 0;
		padding: 0;
		font: inherit;
		list-style: none;
	}

	.glyph {
		display: block;
		flex: none;
	}

	.grow {
		flex: 1;
	}

	/* meeting bar */
	.bar {
		display: flex;
		align-items: center;
		justify-content: space-between;
		height: 81px;
		padding: 0 27px 0 26px;
		background: #fdfdfd;
		box-shadow: 0 1px 4px rgb(0 0 0 / 25%);
		z-index: 1;
	}

	.status {
		display: flex;
		align-items: center;
	}

	.status .glyph + .glyph {
		margin-left: 20px;
	}

	.timer {
		margin-left: 16px;
		font-size: 18px;
	}

	.calls {
		display: flex;
		align-items: center;
	}

	.call {
		display: flex;
		flex-direction: column;
		align-items: center;
		gap: 7px;
		width: 76px;
		padding-top: 3px;
		font-size: 15px;
		line-height: 18px;
		white-space: nowrap;
	}

	.call.wide {
		width: 98px;
	}

	.call:disabled {
		color: #b8b8b8;
	}

	.call-icon {
		position: relative;
		display: flex;
		align-items: center;
		gap: 4px;
		height: 28px;
	}

	.call-icon b {
		font-size: 16px;
		font-weight: 500;
	}

	.dot {
		position: absolute;
		top: -2px;
		right: -2px;
		width: 8px;
		height: 8px;
		border-radius: 50%;
		background: #c50f1f;
	}

	.rule {
		width: 1px;
		height: 43px;
		margin: 0 10px;
		background: #d1d1d1;
	}

	.drop {
		display: flex;
		justify-content: center;
		width: 26px;
		padding-top: 4px;
	}

	.leave {
		display: flex;
		align-items: center;
		justify-content: center;
		gap: 8px;
		width: 128px;
		height: 43px;
		margin-left: 15px;
		border-radius: 5px;
		background: #c01a30;
		color: #fff;
		font-size: 18px;
		font-weight: 600;
	}

	/* participants */
	.strip {
		display: flex;
		gap: 6px;
		padding: 7px 28px 6px 27px;
	}

	.pager {
		display: grid;
		place-items: center;
		width: 43px;
		margin: 1px 0;
		border-radius: 5px;
		background: #fdfdfd;
	}

	.pager.off {
		color: #aaa;
	}

	.tile {
		position: relative;
		flex: 1 1 100px;
		display: grid;
		place-items: center;
		height: 175px;
		border: 1px solid #cfd3d8;
		border-radius: 7px;
	}

	.mint { background: linear-gradient(120deg, #dff2e8, #dcebee 55%, #dfe0f0); }
	.sky { background: linear-gradient(150deg, #e4e8f4, #e6eaf0 50%, #efefe6); }
	.sand { background: linear-gradient(110deg, #f3e9e0, #f1f1e2 60%, #ebeedd); }
	.black { background: #000; border-color: #000; }
	.lilac { background: linear-gradient(100deg, #e4ecea, #e0daec 35%, #eee2ec 75%, #e8e8ee); }
	.green { background: linear-gradient(140deg, #e2f1ea, #e6efe6 40%, #e8e8ee); }
	.speaking { border: 4px solid #463fb8; background: linear-gradient(160deg, #ecf0ec, #efeef0 55%, #f3e6e4); }
	.tile.self { flex: 0 0 315px; background: linear-gradient(60deg, #e6e4f0, #ebece8 35%, #eeeee4); }

	.avatar {
		display: grid;
		place-items: center;
		width: 87px;
		height: 87px;
		border-radius: 50%;
		box-shadow: 0 2px 4px rgb(0 0 0 / 20%);
		font-family: 'Open Sans', 'Noto Sans', sans-serif;
		font-size: 33px;
		font-weight: 600;
	}

	.avatar.pink {
		background: #edc9ce;
		color: #5c1024;
		box-shadow: none;
	}

	.tag {
		--cut: #666;
		position: absolute;
		left: 10px;
		bottom: 10px;
		display: flex;
		align-items: center;
		justify-content: space-between;
		height: 32px;
		min-width: 37px;
		padding: 0 8px;
		border-radius: 5px;
		background: rgb(60 60 60 / 75%);
		color: #fff;
		font-size: 16px;
		white-space: nowrap;
	}

	.tag.full,
	.sky .tag {
		width: 142px;
	}

	.speaking .tag {
		left: 7px;
		bottom: 7px;
	}

	.black .tag {
		background: none;
	}

	/* shared screen */
	.stage {
		position: relative;
		flex: 1;
		min-height: 0;
		display: flex;
		margin: 0 7px 7px;
		padding: 0 84px;
		border-radius: 10px;
		background: #000;
		overflow: hidden;
	}

	.rdm {
		flex: 1;
		min-width: 0;
		display: flex;
		flex-direction: column;
		background: #ece9ec;
		font-family: 'DejaVu Sans', Verdana, sans-serif;
		font-size: 6px;
		line-height: 8px;
		color: #111;
		white-space: nowrap;
	}

	.vline {
		width: 1px;
		height: 9px;
		background: #bbb;
	}

	.quick {
		display: grid;
		grid-template-columns: 1fr auto 1fr;
		align-items: center;
		height: 13px;
		padding: 0 5px 0 7px;
	}

	.quick-left {
		display: flex;
		align-items: center;
		gap: 8px;
	}

	.quick-left label {
		margin-left: -2px;
	}

	.host {
		display: flex;
		align-items: center;
		gap: 4px;
		width: 130px;
		height: 12px;
		margin-left: -5px;
		padding: 0 2px;
		background: #fdfdfd;
	}

	.host input {
		flex: 1;
	}

	.host input::placeholder,
	.nav-search input::placeholder {
		color: #aaa;
	}

	.lock {
		margin: 0 6px 0 10px;
	}

	.win {
		display: flex;
		justify-content: flex-end;
		gap: 11px;
	}

	.menu {
		display: flex;
		align-items: center;
		gap: 16px;
		height: 20px;
		padding: 0 12px 0 13px;
	}

	.menu button {
		height: 18px;
		border: solid transparent;
		border-width: 2px 0;
	}

	.menu button:first-child {
		margin-right: 8px;
	}

	.menu button.on {
		font-family: 'DejaVu Sans Condensed', 'DejaVu Sans', sans-serif;
		font-weight: bold;
		border-bottom-color: #1c6fc0;
	}

	.find {
		display: flex;
		align-items: center;
		gap: 3px;
		width: 87px;
		height: 12px;
		margin-left: -4px;
		padding-left: 2px;
		background: #fdfdfd;
	}

	.find input {
		flex: 1;
	}

	.fold {
		margin-left: auto;
	}

	.actions {
		display: flex;
		height: 17px;
		margin: 0 8px 3px 9px;
		padding-left: 1px;
		border-radius: 4px;
		background: #f8f6f9;
	}

	.actions button {
		display: flex;
		align-items: center;
		gap: 2px;
		padding: 0 3px;
		border-right: 1px solid transparent;
	}

	.actions .end {
		padding-right: 4px;
		border-color: #ddd;
	}

	.actions .end + button {
		padding-left: 4px;
	}

	.body {
		flex: 1;
		min-height: 0;
		display: flex;
	}

	/* navigation */
	.nav {
		width: 155px;
		display: flex;
		flex-direction: column;
		border-right: 1px solid #cfcacf;
		background: #fdfdfd;
		overflow: hidden;
	}

	.nav h2 {
		display: flex;
		align-items: center;
		gap: 8px;
		height: 16px;
		padding: 0 6px 1px 4px;
		background: #f0eef0;
		font-family: 'DejaVu Sans Condensed', 'DejaVu Sans', sans-serif;
		font-size: 8px;
		font-weight: bold;
	}

	.nav h2 span {
		flex: 1;
		margin-left: -5px;
	}

	.nav-name {
		padding: 4px 2px;
		background: #ebe9eb;
	}

	.tree {
		flex: 79;
		min-height: 0;
		display: grid;
		grid-auto-rows: 1fr;
	}

	.tree li {
		display: flex;
		align-items: center;
		gap: 2px;
		min-height: 0;
		color: #222;
		white-space: pre;
	}

	.tree li > .glyph {
		color: #2b9ad6;
	}

	.tree .root,
	.tree .active {
		font-family: 'DejaVu Sans Condensed', 'DejaVu Sans', sans-serif;
		font-weight: bold;
	}

	.tree .root {
		color: #1c2b6b;
	}

	.tree .active {
		background: #bfe6f8;
	}

	.twist {
		width: 7px;
	}

	.blank {
		flex: 21;
	}

	.nav-scroll {
		padding: 4px 19px 4px 10px;
		background: #f0eef0;
	}

	.nav-scroll i {
		display: block;
		height: 2px;
		background: #8a8a8a;
	}

	.nav-tools {
		display: flex;
		align-items: center;
		gap: 16px;
		height: 27px;
		padding-left: 1px;
		background: #f6f5f8;
	}

	.picked {
		display: grid;
		place-items: center;
		width: 25px;
		height: 23px;
		border: 1px solid #3a9ad0;
		border-radius: 2px;
		background: #bfe0f2;
		margin-right: -8px;
	}

	.nav-search {
		display: flex;
		align-items: center;
		gap: 2px;
		height: 15px;
		padding: 0 3px;
		background: #ebe9eb;
	}

	.nav-search label {
		flex: 1;
		display: flex;
		align-items: center;
		gap: 6px;
		height: 12px;
		padding: 0 4px 0 2px;
		background: #fdfdfd;
	}

	.nav-search input {
		flex: 1;
	}

	/* session window */
	.work {
		flex: 1;
		min-width: 0;
		display: flex;
		flex-direction: column;
	}

	.tabs {
		display: flex;
		height: 15px;
		padding-right: 6px;
		align-items: center;
	}

	.tabs button {
		display: flex;
		align-items: center;
		gap: 2px;
		height: 15px;
		padding: 0 8px;
	}

	.tabs .on {
		gap: 4px;
		margin-left: 16px;
		padding: 0 6px;
		border-radius: 4px 4px 0 0;
		background: #b9b5b8;
		font-weight: bold;
	}

	.srt {
		flex: 1;
		min-height: 0;
		display: flex;
		flex-direction: column;
		background: #f0edf0;
		font-family: 'Liberation Sans', Arial, sans-serif;
		font-size: 7px;
	}

	.title,
	.ribbon-tabs,
	.ribbon {
		font-family: 'Open Sans', 'Noto Sans', sans-serif;
		color: #43506a;
	}

	.title {
		display: flex;
		align-items: center;
		height: 13px;
		padding: 0 12px 0 2px;
		background: #fdfdfd;
	}

	.title h1 {
		flex: 1;
		text-align: center;
		color: #222;
	}

	.title-tools {
		display: flex;
		align-items: center;
		gap: 3px;
		width: 60px;
		font-size: 9px;
	}

	.title-win {
		display: flex;
		justify-content: flex-end;
		gap: 21px;
		width: 84px;
	}

	.ribbon-tabs {
		display: flex;
		align-items: center;
		height: 14px;
		padding: 0 4px 0 2px;
		border-bottom: 1px solid #b9c4d0;
		background: #fdfdfd;
	}

	.ribbon-tabs button {
		width: 37px;
		height: 14px;
	}

	.ribbon-tabs .file {
		width: 32px;
		margin-right: 2px;
		background: linear-gradient(#2f7ddc, #1557b8);
		color: #fff;
	}

	.ribbon-tabs .on {
		border: solid #c4d3e4;
		border-width: 1px 1px 0;
		background: #e9f3fc;
	}

	.ribbon {
		display: flex;
		height: 58px;
		border-bottom: 1px solid #94a9c2;
		background: linear-gradient(#e6f1fa, #dae7f5 55%, #cddceb);
	}

	.group {
		display: flex;
		flex-direction: column;
		justify-content: space-between;
		padding: 3px 0 2px 5px;
		border-right: 1px solid #bccbdc;
	}

	.group p {
		text-align: center;
		line-height: 10px;
		color: #66758a;
	}

	.cols {
		display: flex;
	}

	.col {
		display: flex;
		flex-direction: column;
		height: 42px;
	}

	.col button {
		display: flex;
		align-items: center;
		gap: 2px;
		height: 14px;
	}

	.col.sep {
		padding-left: 4px;
		border-left: 1px solid #b3bfce;
	}

	.clip {
		width: 73px;
		padding-left: 2px;
	}

	.clip .cols {
		gap: 5px;
	}

	.paste {
		display: flex;
		flex-direction: column;
		align-items: center;
		gap: 3px;
	}

	.lookup {
		width: 102px;
		padding-left: 2px;
	}

	.fields {
		display: grid;
		grid-template-columns: 30px 67px;
		align-items: center;
		row-gap: 2px;
	}

	/* shared small controls */
	.combo {
		position: relative;
		display: inline-flex;
		height: 12px;
		border: 1px solid #c9c9cb;
		background: #ececee;
		color: #888;
	}

	.combo::after {
		content: '';
		position: absolute;
		top: 2px;
		right: 3px;
		width: 4px;
		height: 4px;
		border: solid #999;
		border-width: 0 1px 1px 0;
		transform: rotate(45deg);
		pointer-events: none;
	}

	.combo select {
		flex: 1;
		width: 100%;
		padding: 0 1px 0 2px;
		appearance: none;
		border-right: 9px solid #fdfdfd;
		opacity: 1;
	}

	.combo.pale {
		border-color: #b6c8dc;
		background: #dfeaf6;
	}

	.combo.pale::after {
		top: 4px;
		right: 2px;
		width: 0;
		height: 0;
		border: solid transparent;
		border-width: 2px 2px 0;
		border-top-color: #333;
		transform: none;
	}

	.combo.pale select,
	.combo.grey select {
		border-right-color: transparent;
	}

	.combo.grey {
		background: #c6c4c6;
		border-color: #bbb;
	}

	.hscroll {
		display: flex;
		align-items: center;
		gap: 3px;
		height: 10px;
		padding: 0 2px;
		background: #f2eef1;
	}

	.track {
		flex: 1;
	}

	.thumb {
		height: 9px;
		background: #c5c2c5;
	}

	.thumb.short { width: 32%; }
	.thumb.long { width: 60%; }
	.thumb.most { width: 81%; }

	input[type='checkbox'] {
		appearance: none;
		flex: none;
		width: 8px;
		height: 8px;
		border: 1px solid #ccc;
		background: #fdfdfd;
	}

	.dock {
		display: flex;
		align-items: center;
		justify-content: space-between;
		height: 10px;
		padding: 0 4px 0 1px;
		background: linear-gradient(#b4c9e4, #dbe5f2);
		color: #5a6a80;
	}

	.dock-tools {
		display: flex;
		gap: 5px;
		color: #222;
	}

	.panes {
		flex: 1;
		min-height: 0;
		display: flex;
		background: #e9ebef;
	}

	/* batch history */
	.history {
		width: 91px;
		display: flex;
		flex-direction: column;
	}

	.history-in {
		flex: 1;
		min-height: 0;
		display: flex;
		flex-direction: column;
		padding: 4px 4px 4px 3px;
	}

	.sheet {
		flex: 1;
		display: flex;
		flex-direction: column;
		justify-content: space-between;
		border: 1px solid #c3c6cc;
		background: #fdfdfd;
	}

	.batch {
		width: 100%;
		height: 207px;
		table-layout: fixed;
		border-collapse: collapse;
	}

	.batch th,
	.batch td {
		padding: 0;
		border: solid #dcdfe4;
		border-width: 0 1px 1px 0;
		font-weight: normal;
		text-align: center;
		overflow: hidden;
	}

	.batch th {
		height: 12px;
	}

	.batch td {
		height: 11px;
	}

	.batch td:first-child {
		padding-left: 3px;
		text-align: left;
	}

	.batch th:nth-child(1) { width: 23%; }
	.batch th:nth-child(2) { width: 21%; }
	.batch th:nth-child(3) { width: 20%; }

	.on td {
		background: #0f8cf4;
		color: #e4f2fd;
	}

	.radios {
		display: flex;
		align-items: center;
		gap: 8px;
		height: 18px;
		padding-left: 1px;
	}

	.radios label {
		display: flex;
		align-items: center;
		gap: 3px;
	}

	.radios input {
		appearance: none;
		width: 8px;
		height: 8px;
		border: 1px solid #555;
		border-radius: 50%;
		background: #fff;
	}

	.radios input:checked {
		background: radial-gradient(#111 45%, #fff 50%);
	}

	.pay {
		height: 40px;
		padding: 2px 2px 12px;
		border: 1px solid #a9a9ad;
		background: #fdfdfd;
		border-spacing: 0;
	}

	.pay td {
		padding: 0 1px;
	}

	.pay td:last-child {
		padding-right: 14px;
		text-align: right;
	}

	.sum {
		display: flex;
		align-items: center;
		justify-content: flex-end;
		gap: 2px;
		height: 12px;
		margin-top: 3px;
	}

	.sum label {
		flex: 1;
		padding-left: 4px;
	}

	.sum input {
		width: 49px;
		height: 12px;
		padding: 0 2px;
		border: 1px solid #9b9b9f;
		text-align: right;
	}

	.sum input.narrow {
		width: 33px;
	}

	.sum i {
		width: 10px;
	}

	/* register */
	.center {
		flex: 1;
		min-width: 0;
		display: flex;
		flex-direction: column;
		margin-left: 2px;
		border-left: 1px solid #aaaeb4;
	}

	.alerts {
		display: grid;
		grid-template-columns: 55px 56px 25px 29px 29px 1fr;
		height: 24px;
		padding: 5px 0 0 234px;
		border-bottom: 1px solid #999;
		background: linear-gradient(#fbfbf8, #f0eff0);
	}

	.frame {
		flex: 1;
		min-height: 0;
		display: flex;
		flex-direction: column;
		border-right: 1px solid #aaaeb4;
		border-bottom: 1px solid #aaaeb4;
	}

	.frame-tabs {
		display: flex;
		justify-content: space-between;
		align-items: center;
		height: 15px;
		padding: 0 2px 0 1px;
		background: #fdfdfd;
	}

	.frame-tabs button {
		height: 12px;
		padding: 0 3px;
		border: 1px solid #aaa;
		border-left-color: #eee;
		background: #f2f2f2;
	}

	.account {
		display: flex;
		align-items: center;
		gap: 6px;
		height: 16px;
		padding: 0 1px 0 6px;
		background: #000072;
		color: #fff;
	}

	.account h2 {
		flex: 1;
		font-family: 'DejaVu Sans Condensed', 'DejaVu Sans', sans-serif;
		font-size: 10px;
		font-weight: bold;
		line-height: 14px;
	}

	.back {
		font-size: 16px;
		line-height: 12px;
	}

	.combo.date {
		width: 54px;
		border: 0;
		border-right: 9px solid #fdfdfd;
		background: #fdfdfd;
		color: #333;
	}

	.combo.date::after {
		right: -6px;
	}

	.combo.date input {
		width: 100%;
		padding-left: 2px;
	}

	.pd {
		display: flex;
		align-items: center;
		gap: 4px;
	}

	.grouping {
		display: flex;
		align-items: center;
		height: 19px;
		margin-top: 1px;
		padding: 0 4px;
		background: linear-gradient(#a5a5a5, #959595);
	}

	.grouping span {
		padding: 2px 5px 2px 2px;
		background: #f6f6f6;
		font-family: 'DejaVu Sans Condensed', 'DejaVu Sans', sans-serif;
		color: #888;
	}

	.grid {
		position: relative;
		flex: 1;
		min-height: 0;
		background: #fdfdfd;
	}

	.pointer {
		position: absolute;
		left: 46%;
		top: 103px;
	}

	.register {
		width: 100%;
		table-layout: fixed;
		border-collapse: collapse;
	}

	.register th {
		height: 14px;
		padding: 0 2px;
		border-right: 1px solid #ccc;
		border-bottom: 1px solid #ddd;
		background: #f8f8f8;
		font-weight: normal;
	}

	.register th div {
		display: flex;
		align-items: center;
		gap: 1px;
	}

	.register th span {
		flex: 1;
		text-align: left;
	}

	.register th .push span {
		text-align: right;
	}

	.register td {
		height: 9px;
		padding: 0 1px;
		border: solid #dedee2;
		border-width: 0 1px 1px 0;
		line-height: 8px;
	}

	.left { text-align: left; }
	.middle { text-align: center; }
	.right { text-align: right; }

	.register .minus {
		color: #e0303c;
	}

	.register .on td {
		border-color: #3a7dbb;
	}

	.draft td {
		background: #b5b3b5;
		border-color: #b5b3b5;
		color: #2a14c8;
	}

	.foot {
		display: flex;
		align-items: center;
		gap: 7px;
		height: 19px;
		padding: 3px 2px 0 4px;
		border-bottom: 1px solid #d5d5d8;
		font-size: 9px;
		font-weight: bold;
	}

	.foot input {
		width: 87px;
		height: 13px;
		padding: 0 2px;
		border: 1px solid #9b9b9f;
		font-size: 8px;
		text-align: right;
	}

	.foot button {
		width: 14px;
		height: 13px;
		margin-left: -6px;
		border: 1px solid #9b9b9f;
	}

	.filter {
		display: flex;
		align-items: center;
		justify-content: flex-end;
		gap: 3px;
		height: 14px;
		padding-right: 5px;
	}

	.filter span:first-child {
		margin-right: 5px;
	}

	.filter input {
		width: 70px;
		height: 12px;
		border: 1px solid #bbb;
		background: #fdfdfd;
	}

	/* register item */
	.item {
		flex: 0 1 608px;
		min-width: 0;
		display: flex;
		flex-direction: column;
		margin-left: 3px;
		border-left: 1px solid #aaaeb4;
	}

	.form {
		flex: 1;
		min-height: 0;
		display: flex;
		flex-direction: column;
		gap: 2px;
		padding: 5px 4px 5px 3px;
		background: #eeebee;
	}

	.form input:not([type='checkbox']) {
		height: 12px;
		padding: 0 2px;
		border: 1px solid #9b9b9f;
		background: #ececee;
	}

	.form .line .white {
		background: #fdfdfd;
	}

	.form .num {
		text-align: right;
	}

	.line {
		display: flex;
		align-items: center;
		gap: 3px;
		height: 12px;
	}

	.lead {
		width: 33px;
	}

	.mid {
		width: 36px;
		margin-left: 10px;
		padding-right: 3px;
		text-align: right;
	}

	.w29 { width: 29px; }
	.w35 { width: 35px; }
	.w46 { width: 46px; }
	.w55 { width: 55px; }
	.w59 { width: 59px; }
	.w60 { width: 60px; }
	.w62 { width: 62px; }
	.w65 { width: 65px; }
	.w92 { width: 92px; }
	.w161 { width: 161px; }

	.spin {
		display: flex;
		align-items: center;
		width: 29px;
		padding-right: 2px;
		border: 1px solid #c0c0c4;
	}

	.form .spin input {
		flex: 1;
		height: 10px;
		border: none;
	}

	.form button {
		height: 12px;
		border: 1px solid #c0c0c2;
		background: #dedcde;
	}

	.line button {
		min-width: 28px;
	}

	.invoice h3 {
		padding-left: 2px;
		font-size: 12px;
		font-weight: bold;
		color: #d8131f;
	}

	.licence {
		margin-top: 6px;
	}

	fieldset {
		margin: 0;
		padding: 0;
		border: 1px solid #d9dade;
		min-width: 0;
	}

	legend {
		display: flex;
		align-items: center;
		gap: 3px;
		height: 10px;
		margin-left: 3px;
		padding: 0 3px 0 0;
	}

	.form legend button {
		width: 9px;
		height: 9px;
		line-height: 6px;
	}

	.return {
		margin: 4px 1px 4px 3px;
		height: 135px;
		padding: 3px 3px 1px 2px;
	}

	.dates {
		display: flex;
		align-items: center;
		justify-content: flex-end;
		gap: 4px;
		padding-right: 25px;
		margin-bottom: 3px;
	}

	.dates label + input {
		color: #888;
	}

	.dates label:not(:first-child) {
		margin-left: 24px;
	}

	.fees {
		display: flex;
		gap: 5px;
	}

	.fees-grid {
		flex: 1;
		display: flex;
		flex-direction: column;
		justify-content: space-between;
		height: 107px;
		border-left: 1px solid #aaa;
		border-top: 1px solid #ccc;
	}

	.fees-grid table {
		width: 100%;
		table-layout: fixed;
		border-collapse: collapse;
	}

	.fees-grid th,
	.fees-grid td {
		height: 12px;
		padding: 0 2px;
		border-right: 1px solid #d5d5d8;
		background: #fdfdfd;
		font-weight: normal;
		line-height: 10px;
	}

	.fees-grid th.left {
		text-align: center;
	}

	.fees-grid td {
		background: #0f8cf4;
		border-right-color: #3a7dbb;
		color: #d5ebfc;
	}

	.fees-grid td:first-child {
		background: #fdfdfd;
		color: #000;
	}

	.row-mark {
		display: block;
		margin-left: 2px;
		border: 3px solid transparent;
		border-left-color: #111;
		border-right-width: 0;
		width: 3px;
	}

	.fees-tools {
		display: flex;
		flex-direction: column;
		gap: 2px;
	}

	.fees-tools button {
		display: grid;
		place-items: center;
		width: 21px;
		height: 13px;
	}

	.fees-tools .off {
		background: #c6c4c6;
		color: #555;
	}

	.fees-tools .gap {
		margin-top: 16px;
	}

	.lower {
		flex: 1;
		min-height: 0;
		display: flex;
		gap: 5px;
	}

	.lower-left {
		flex: 1;
		display: flex;
		flex-direction: column;
		padding-left: 3px;
	}

	.misc {
		height: 41px;
	}

	.misc-line {
		display: flex;
		align-items: center;
		gap: 4px;
		padding: 5px 4px 0 6px;
	}

	.misc-line > span:first-child {
		width: 17px;
	}

	.misc-line button {
		width: 14px;
		margin-left: -2px;
	}

	.note {
		padding: 9px 2px 2px;
	}

	.comment {
		flex: 1;
		display: flex;
		border: 1px solid #9b9b9f;
	}

	.comment textarea {
		flex: 1;
		resize: none;
	}

	.comment span {
		display: flex;
		flex-direction: column;
		justify-content: space-between;
		width: 10px;
		padding: 2px;
		background: #f2eef1;
		color: #999;
	}

	.last {
		margin: 4px 0;
	}

	.last .lead {
		width: 23px;
		padding-left: 2px;
	}

	.totals {
		width: 177px;
		display: flex;
		flex-direction: column;
		border: 1px solid #8f8f94;
	}

	.totals-rows {
		flex: 16;
		display: grid;
		grid-auto-rows: 1fr;
	}

	.totals-rows div {
		display: flex;
		align-items: center;
		gap: 3px;
		padding: 0 4px 0 3px;
	}

	.totals-rows label {
		flex: 1;
	}

	.totals-rows .bold label {
		font-weight: bold;
	}

	.totals-rows i {
		width: 8px;
	}

	.totals-rows input[type='checkbox'] {
		border-color: #666;
	}

	.totals-rest {
		flex: 9;
	}

	.rate {
		margin-top: 4px;
	}

	.rate .lead {
		width: 26px;
	}

	.todo {
		height: 67px;
		padding: 4px 3px;
		border: 1px solid #9b9b9f;
		border-left: 0;
		background: #fdfdfd;
	}

	.scan {
		display: flex;
		align-items: center;
		height: 15px;
		padding: 0 10px 0 1px;
	}

	.scan span {
		margin-left: auto;
	}

	.pages {
		display: flex;
		height: 14px;
		border-top: 1px solid #d5d5d8;
	}

	.pages button {
		padding: 0 3px;
		border-right: 1px solid #ccc;
		color: #777;
	}

	.pages .on {
		background: #fdfdfd;
		color: #222;
	}

	.side {
		width: 14px;
		display: flex;
		flex-direction: column;
		gap: 9px;
		background: #edf1fb;
	}

	.side button {
		writing-mode: vertical-rl;
		width: 11px;
		margin-left: 2px;
		padding: 4px 0;
		border: 1px solid #d0d2d8;
		background: #ececf0;
	}

	.info {
		display: flex;
		align-items: center;
		justify-content: flex-end;
		gap: 15px;
		height: 13px;
		padding-right: 18px;
		border-top: 1px solid #ccc;
		font-size: 6px;
	}

	.taskbar {
		display: flex;
		align-items: center;
		gap: 6px;
		height: 24px;
		padding-right: 13px;
		background: #020208;
		color: #eee;
		line-height: 10px;
		font-family: 'Liberation Sans', Arial, sans-serif;
		font-size: 7px;
	}

	.taskbar button {
		display: grid;
		place-items: center;
		width: 23px;
		height: 24px;
		border-bottom: 2px solid transparent;
	}

	.taskbar button:first-child {
		margin-left: 3px;
	}

	.taskbar .open {
		border-bottom-color: #76b9ed;
	}

	.taskbar .on {
		width: 28px;
		margin-left: -2px;
		background: #333338;
	}

	.taskbar b {
		width: 15px;
		height: 15px;
		border-radius: 2px;
		background: #f8f8f8;
		color: #222;
		font-size: 12px;
		line-height: 15px;
		text-align: center;
	}

	.taskbar time {
		margin-right: 4px;
		text-align: center;
	}

	.entries {
		display: flex;
		align-items: center;
		gap: 8px;
		height: 15px;
		padding: 0 3px 0 4px;
		background: #e9e9ea;
	}

	.backup {
		display: flex;
		align-items: center;
		gap: 2px;
	}

	/* overlays */
	.presenter {
		position: absolute;
		left: 8px;
		bottom: 11px;
		padding: 0 9px 0 11px;
		border-radius: 5px;
		background: rgb(0 0 0 / 55%);
		color: #fff;
		font-size: 16px;
		line-height: 32px;
	}

	.recorder {
		position: absolute;
		left: 0;
		top: 304px;
		z-index: 2;
		display: flex;
		flex-direction: column;
		align-items: center;
		gap: 12px;
		width: 76px;
		height: 170px;
		padding: 12px 0 0 2px;
		border: 1px solid #444;
		border-radius: 38px;
		background: #1f1f1f;
		color: #fff;
		font-size: 16px;
		font-weight: 600;
		line-height: 20px;
	}

	.halt {
		display: grid;
		place-items: center;
		width: 55px;
		height: 55px;
		border-radius: 50%;
		background: #ee4338;
	}

	.halt::before {
		content: '';
		width: 23px;
		height: 23px;
		border-radius: 3px;
		background: #fff;
	}

	.pause {
		display: flex;
		gap: 4px;
		margin-top: 10px;
	}

	.pause::before,
	.pause::after {
		content: '';
		width: 6px;
		height: 20px;
		border-radius: 2px;
		background: #fff;
	}
</style>
